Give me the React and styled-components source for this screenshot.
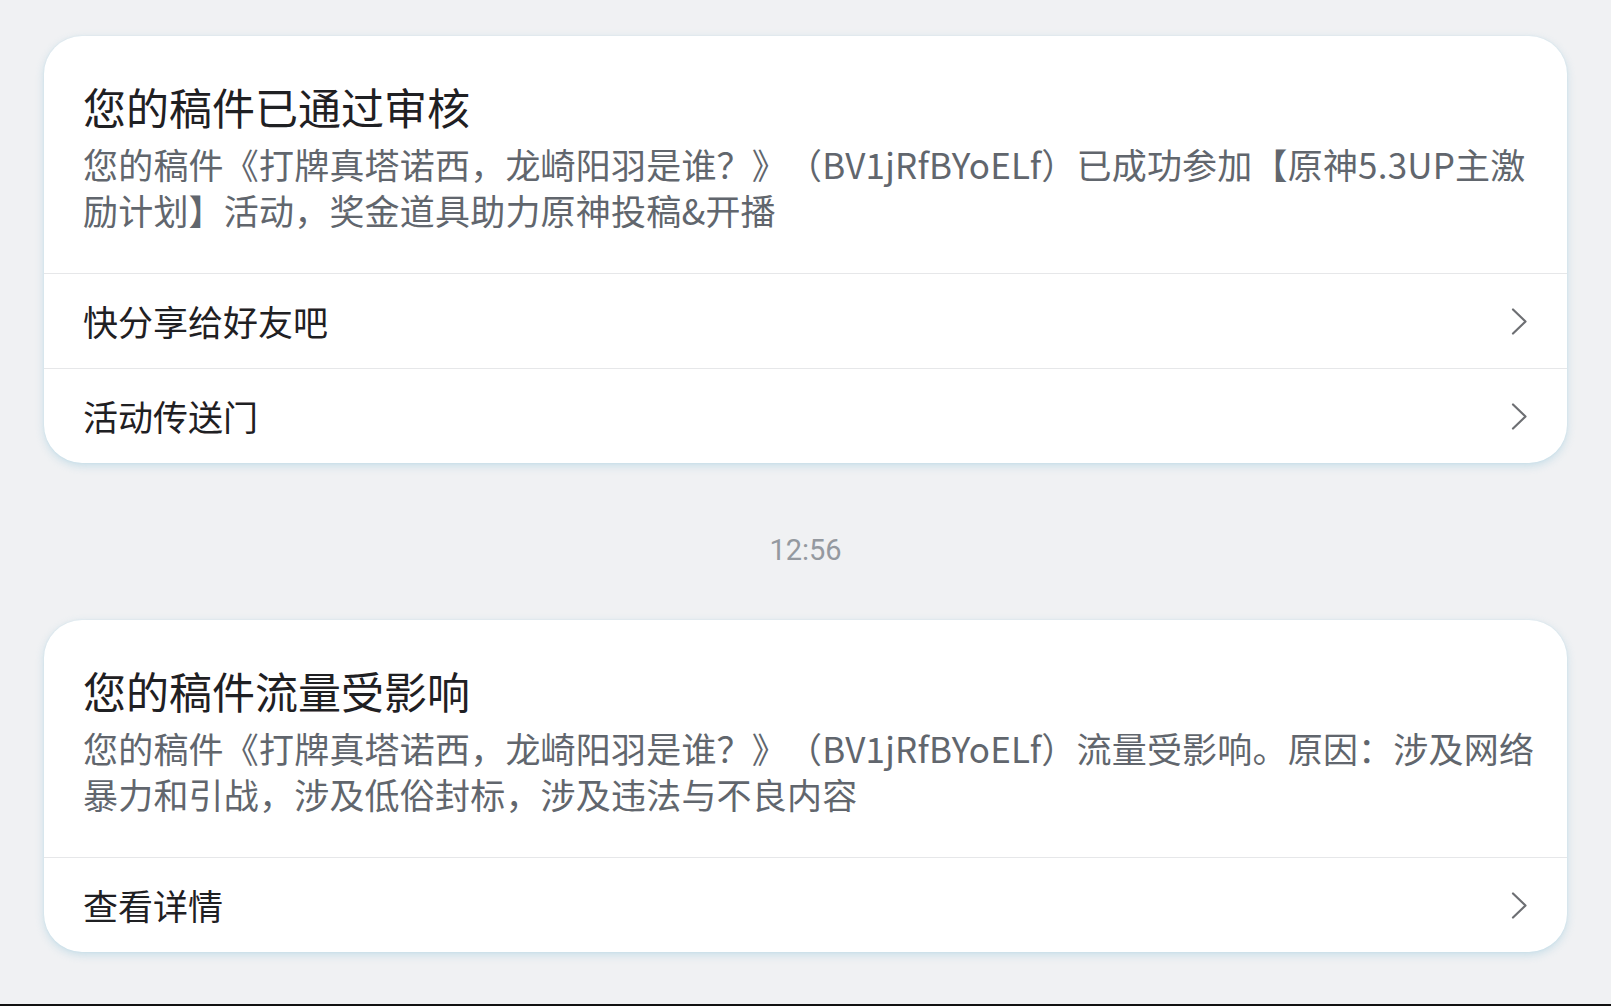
import React from "react";
import styled, { createGlobalStyle } from "styled-components";

const GlobalStyle = createGlobalStyle`
  html, body {
    margin: 0;
    padding: 0;
    background: #f0f1f3;
  }
  body {
    font-family: "Noto Sans CJK SC", "Noto Sans", sans-serif;
    text-spacing-trim: space-all;
  }
`;

const Page = styled.div`
  height: 1006px;
  display: flex;
  flex-direction: column;
  background: #f0f1f3;
  overflow: hidden;
`;

const Feed = styled.div`
  flex: 1;
  padding: 36px 44px 0;
  display: flex;
  flex-direction: column;
`;

const Card = styled.div`
  background: #fff;
  border-radius: 38px;
  box-shadow: 0 3px 8px rgba(150, 200, 220, 0.45), 0 0 2px rgba(170, 210, 225, 0.35);
  overflow: hidden;
`;

const Content = styled.div`
  padding: 42px 39px 40px;
`;

const Title = styled.h3`
  margin: 0 0 7px;
  font-size: 43px;
  line-height: 56px;
  font-weight: 400;
  color: #1f2023;
  white-space: nowrap;
`;

const Desc = styled.p`
  margin: 0;
  font-size: 35px;
  line-height: 46px;
  letter-spacing: 0.2px;
  color: #61666d;
`;

const Line = styled.span`
  display: block;
  white-space: nowrap;
`;

const Row = styled.div`
  height: 95px;
  display: flex;
  align-items: center;
  justify-content: space-between;
  padding: 0 39px;
  border-top: 1px solid #e6e7e9;
  box-sizing: border-box;
`;

const RowText = styled.span`
  font-size: 35px;
  color: #1f2023;
  margin-top: -2px;
`;

const Time = styled.div`
  margin: 67px 0 50px;
  text-align: center;
  font-family: Roboto, "Noto Sans", sans-serif;
  font-size: 29px;
  line-height: 40px;
  color: #9499a0;
`;

const Strip = styled.div`
  height: 2px;
  background: #111;
`;

const Chevron = () => (
  <svg width="17" height="27" viewBox="0 0 17 27" fill="none">
    <path
      d="M2 1.5 L14.5 13.5 L2 25.5"
      stroke="#6d6f73"
      strokeWidth="2.2"
      strokeLinecap="round"
      strokeLinejoin="round"
    />
  </svg>
);

const NoticeCard = ({ title, lines, actions }) => (
  <Card>
    <Content>
      <Title>{title}</Title>
      <Desc>
        {lines.map((l) => (
          <Line key={l}>{l}</Line>
        ))}
      </Desc>
    </Content>
    {actions.map((a) => (
      <Row key={a}>
        <RowText>{a}</RowText>
        <Chevron />
      </Row>
    ))}
  </Card>
);

const App = () => (
  <Page>
    <GlobalStyle />
    <Feed>
      <NoticeCard
        title="您的稿件已通过审核"
        lines={[
          "您的稿件《打牌真塔诺西，龙崎阳羽是谁？》（BV1jRfBYoELf）已成功参加【原神5.3UP主激",
          "励计划】活动，奖金道具助力原神投稿&开播",
        ]}
        actions={["快分享给好友吧", "活动传送门"]}
      />
      <Time>12:56</Time>
      <NoticeCard
        title="您的稿件流量受影响"
        lines={[
          "您的稿件《打牌真塔诺西，龙崎阳羽是谁？》（BV1jRfBYoELf）流量受影响。原因：涉及网络",
          "暴力和引战，涉及低俗封标，涉及违法与不良内容",
        ]}
        actions={["查看详情"]}
      />
    </Feed>
    <Strip />
  </Page>
);

export default App;
